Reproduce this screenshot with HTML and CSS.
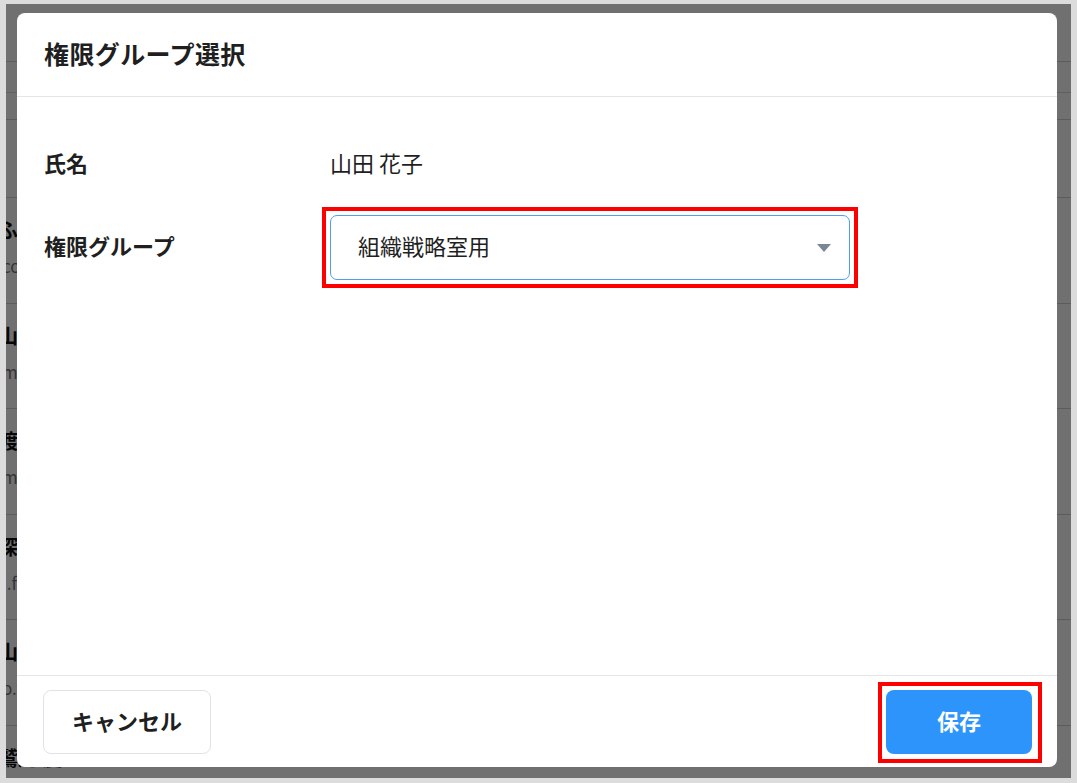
FILE: index.html
```html
<!DOCTYPE html>
<html lang="ja">
<head>
<meta charset="utf-8">
<title>権限グループ選択</title>
<link rel="stylesheet" href="styles.css">
</head>
<body>
<div class="screen">
  <div class="bg">
    <div class="bg-band b1"></div>
    <div class="bg-band b2"></div>
    <div class="bg-band b3"></div>
    <div class="bg-band b4"></div>
    <div class="bg-row"><div class="bg-name">ふじた 健</div><div class="bg-mail">contact@example.jp</div></div>
    <div class="bg-row"><div class="bg-name">山田 花子</div><div class="bg-mail">m.yamada@example.jp</div></div>
    <div class="bg-row"><div class="bg-name">渡辺 翔</div><div class="bg-mail">m.watanabe@example.jp</div></div>
    <div class="bg-row"><div class="bg-name">深田 綾</div><div class="bg-mail">i.fukada@example.jp</div></div>
    <div class="bg-row"><div class="bg-name">山本 純</div><div class="bg-mail">o.yamamoto@example.jp</div></div>
    <div class="bg-row"><div class="bg-name">鷲尾 慶</div><div class="bg-mail">k.washio@example.jp</div></div>
  </div>

  <div class="overlay">
    <div class="modal">
      <div class="modal-header">
        <h1 class="modal-title">権限グループ選択</h1>
      </div>
      <div class="modal-body">
        <div class="field">
          <div class="field-label">氏名</div>
          <div class="field-value">山田 花子</div>
        </div>
        <div class="field">
          <div class="field-label">権限グループ</div>
          <div class="select highlight">
            <span class="select-text">組織戦略室用</span>
            <svg class="caret" width="14" height="8" viewBox="0 0 14 8"><path d="M0 0 H14 L7 8 Z" fill="#7b8694"/></svg>
          </div>
        </div>
      </div>
      <div class="modal-footer">
        <button class="btn btn-cancel">キャンセル</button>
        <button class="btn btn-save highlight">保存</button>
      </div>
    </div>
  </div>
</div>
</body>
</html>
```

FILE: styles.css
```css
html, body {
  margin: 0;
  padding: 0;
}
body {
  background: #dcdcdc;
  width: 1077px;
  height: 783px;
  overflow: hidden;
  font-family: "Noto Sans CJK JP", "Noto Sans", sans-serif;
  color: #1f1f1f;
}
.screen {
  position: relative;
  margin: 4px 6px 0 6px;
  height: 774px;
  overflow: hidden;
  background: #ffffff;
}

/* page behind the dialog */
.bg {
  display: flex;
  flex-direction: column;
}
.bg-band {
  box-sizing: border-box;
  border-bottom: 1px solid #d2d2d2;
}
.bg-band.b1 { height: 58px; }
.bg-band.b2 { height: 31px; border-bottom-color: #dadada; }
.bg-band.b3 { height: 27px; }
.bg-band.b4 { height: 78px; }
.bg-row {
  box-sizing: border-box;
  height: 105.5px;
  padding-top: 18px;
  border-bottom: 1px solid #d2d2d2;
  display: flex;
  flex-direction: column;
  gap: 10px;
}
.bg-name {
  font-size: 20px;
  line-height: 28px;
  font-weight: 700;
  color: #111;
  margin-left: -8px;
}
.bg-mail {
  font-size: 17px;
  line-height: 24px;
  color: #777;
  margin-left: -4px;
}

/* dialog */
.overlay {
  position: absolute;
  inset: 0;
  background: rgba(0, 0, 0, 0.56);
  display: flex;
  padding: 9px 14px 11px 11px;
  box-sizing: border-box;
}
.modal {
  flex: 1;
  background: #ffffff;
  border-radius: 8px;
  display: flex;
  flex-direction: column;
}
.modal-header {
  box-sizing: border-box;
  height: 84px;
  border-bottom: 1px solid #e2e5e9;
  display: flex;
  align-items: center;
  padding: 0 27px;
}
.modal-title {
  margin: 0;
  font-size: 25px;
  line-height: 30px;
  padding-bottom: 4px;
  font-weight: 700;
  color: #1f1f1f;
  letter-spacing: 0.4px;
}
.modal-body {
  flex: 1;
  padding: 53px 27px 0 27px;
  display: flex;
  flex-direction: column;
  gap: 35px;
}
.field {
  display: flex;
  align-items: center;
  min-height: 30px;
}
.field-label {
  width: 286px;
  font-size: 22px;
  line-height: 24px;
  padding-bottom: 6px;
  font-weight: 700;
}
.field-value {
  font-size: 22px;
  line-height: 24px;
  padding-bottom: 6px;
  font-weight: 400;
}
.select {
  position: relative;
  width: 520px;
  height: 65px;
  box-sizing: border-box;
  border: 1.5px solid #4d9ff2;
  border-radius: 7px;
  display: flex;
  align-items: center;
  justify-content: space-between;
  padding: 0 18px 0 27px;
}
.select-text {
  font-size: 22px;
  line-height: 24px;
  padding-bottom: 6px;
  font-weight: 400;
}
.select.highlight::after {
  content: "";
  position: absolute;
  inset: -9px;
  border: 4px solid #ff0000;
  pointer-events: none;
}
.modal-footer {
  height: 91px;
  border-top: 1px solid #e2e5e9;
  display: flex;
  align-items: center;
  justify-content: space-between;
  padding: 0 25px 0 26px;
}
.btn {
  font-family: "Noto Sans CJK JP", "Noto Sans", sans-serif;
  font-size: 22px;
  font-weight: 700;
  height: 64px;
  padding: 0 0 4px 0;
  border-radius: 8px;
  cursor: pointer;
}
.btn-cancel {
  width: 168px;
  background: #ffffff;
  border: 1.5px solid #dfe3e8;
  color: #1f1f1f;
}
.btn-save {
  position: relative;
  width: 146px;
  background: #2d94fc;
  border: none;
  color: #ffffff;
}
.btn-save.highlight::after {
  content: "";
  position: absolute;
  top: -8px;
  left: -8px;
  right: -10px;
  bottom: -9px;
  border: 4px solid #ff0000;
  pointer-events: none;
}
```
